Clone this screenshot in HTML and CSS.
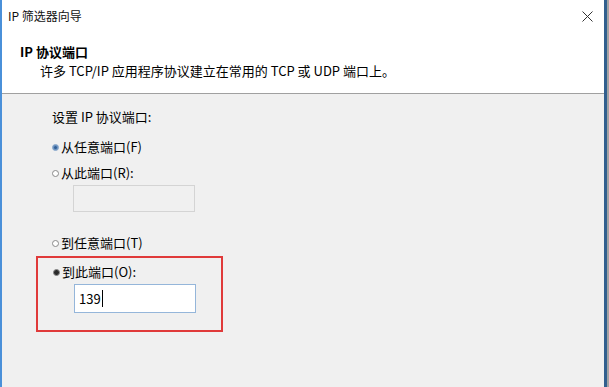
FILE: index.html
```html
<!DOCTYPE html>
<html>
<head>
  <meta charset="UTF-8">
  <title>IP 筛选器向导</title>
  <link rel="stylesheet" href="styles.css">
</head>
<body>
  <div class="window">
    <div class="titlebar">
      <span class="title">IP 筛选器向导</span>
      <svg class="close" width="11" height="11" viewBox="0 0 11 11">
        <path d="M0.5 0.5 L10.5 10.5 M10.5 0.5 L0.5 10.5" stroke="#333" stroke-width="1" fill="none"/>
      </svg>
    </div>

    <div class="header">
      <h3>IP 协议端口</h3>
      <p>许多 TCP/IP 应用程序协议建立在常用的 TCP 或 UDP 端口上。</p>
    </div>

    <div class="content">
      <div class="label">设置 IP 协议端口:</div>

      <div class="radio-row first">
        <span class="radio checked"></span>
        <span>从任意端口(F)</span>
      </div>
      <div class="radio-row">
        <span class="radio"></span>
        <span>从此端口(R):</span>
      </div>
      <div class="textbox disabled"></div>

      <div class="radio-row gap">
        <span class="radio"></span>
        <span>到任意端口(T)</span>
      </div>

      <!-- 红框标注 -->
      <div class="highlight">
        <div class="radio-row">
          <span class="radio checked dark"></span>
          <span>到此端口(O):</span>
        </div>
        <div class="textbox active">139<span class="caret"></span></div>
      </div>
    </div>
  </div>
</body>
</html>
```

FILE: styles.css
```css
body {
  margin: 0;
  background-color: #a3a3a3;
  font-family: 'Noto Sans CJK SC', 'Noto Sans', sans-serif;
  font-size: 13px;
  color: #000;
}
.window {
  width: 602px;
  height: 387px;
  border-left: 2px solid #4a90d9;
  border-right: 3px solid #315f8e;
  background-color: #f0f0f0;
  overflow: hidden;
}
.titlebar {
  height: 32px;
  display: flex;
  align-items: center;
  justify-content: space-between;
  padding: 0 11px 0 6px;
  background-color: #fff;
}
.title {
  font-size: 12px;
  line-height: 16px;
  color: #111;
}
.close {
  display: block;
}
.header {
  height: 62px;
  padding-left: 18px;
  background-color: #fff;
  border-bottom: 1px solid #a0a0a0;
  box-sizing: border-box;
}
.header h3 {
  margin: 0;
  padding-top: 11px;
  font-size: 13px;
  line-height: 18px;
  font-weight: bold;
}
.header p {
  margin: 1px 0 0 20px;
  line-height: 18px;
}
.content {
  padding: 14px 0 0 50px;
}
.label {
  line-height: 18px;
}
.radio-row {
  display: flex;
  align-items: center;
  line-height: 18px;
  margin-top: 8px;
}
.radio-row.first {
  margin-top: 12px;
}
.radio-row.gap {
  margin-top: 22px;
}
.radio {
  width: 7px;
  height: 7px;
  border: 1px solid #8a8a8a;
  border-radius: 50%;
  background-color: #fff;
  margin-right: 2px;
  box-sizing: border-box;
}
.radio.checked {
  border-color: #9bb7d6;
  background-color: #2f5f97;
  box-shadow: inset 0 0 0 1px #6f95c2;
}
.radio.dark {
  background-color: #2a2a2a;
  border-color: #8a8a8a;
  box-shadow: none;
}
.textbox {
  margin: 3px 0 0 21px;
  width: 122px;
  height: 27px;
  box-sizing: border-box;
  border: 1px solid #d4d4d4;
  background-color: #f0f0f0;
}
.textbox.active {
  height: 29px;
  border-color: #95b6da;
  background-color: #fff;
  padding-left: 4px;
  line-height: 26px;
  display: flex;
  align-items: center;
}
.caret {
  display: inline-block;
  width: 1px;
  height: 17px;
  background-color: #000;
  margin-left: 1px;
}
.highlight {
  width: 187px;
  height: 76px;
  margin: 4px 0 0 -16px;
  padding: 5px 0 0 15px;
  border: 2px solid #e03a3a;
  box-sizing: border-box;
}
.highlight .radio-row {
  margin-top: 0;
}
```
